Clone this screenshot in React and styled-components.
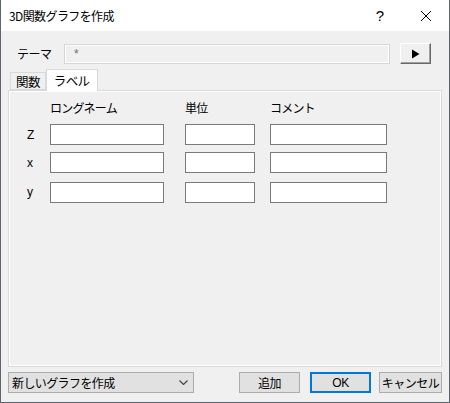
import React from 'react';
import styled, { createGlobalStyle } from 'styled-components';

const GlobalStyle = createGlobalStyle`
    html, body {
        margin: 0;
        padding: 0;
        background: #f0f0f0;
    }
    body {
        font-family: "Noto Sans CJK JP", "Noto Sans", sans-serif;
        font-size: 12px;
        color: #000;
    }
`;

const Window = styled.div`
    width: 450px;
    height: 403px;
    box-sizing: border-box;
    display: flex;
    flex-direction: column;
    background: #f0f0f0;
    border: 1px solid #5f6470;
    border-top: none;
`;

const TitleBar = styled.div`
    height: 31px;
    flex: none;
    background: #fff;
    display: flex;
    align-items: center;
    padding-left: 8px;
    font-size: 12px;
`;

const Title = styled.div`
    flex: 1;
    letter-spacing: -0.6px;
`;

const TitleButton = styled.div`
    width: 46px;
    height: 31px;
    display: flex;
    align-items: center;
    justify-content: center;
    font-family: "Liberation Sans", sans-serif;
    font-size: 15px;
`;

const Body = styled.div`
    flex: 1;
    display: flex;
    flex-direction: column;
    padding: 12px 7px 0 7px;
`;

const ThemeRow = styled.div`
    display: flex;
    align-items: center;
    height: 21px;
`;

const ThemeLabel = styled.div`
    width: 56px;
    padding-left: 9px;
    box-sizing: border-box;
    letter-spacing: -0.5px;
`;

const ThemeField = styled.div`
    width: 326px;
    height: 20px;
    box-sizing: border-box;
    border: 1px solid #d6d6d6;
    box-shadow: inset 0 0 0 1px #fff;
    background: #f0f0f0;
    color: #6d6d6d;
    font-family: "Liberation Sans", sans-serif;
    font-size: 12px;
    padding-left: 9px;
    line-height: 18px;
`;

const ArrowButton = styled.div`
    margin-left: 10px;
    width: 31px;
    height: 21px;
    box-sizing: border-box;
    border-top: 1px solid #fff;
    border-left: 1px solid #fff;
    border-right: 1px solid #696969;
    border-bottom: 1px solid #696969;
    box-shadow: inset -1px -1px 0 #a0a0a0;
    display: flex;
    align-items: center;
    justify-content: center;
    background: #f0f0f0;
`;

const TabStrip = styled.div`
    display: flex;
    align-items: flex-end;
    margin-top: 5px;
    height: 21px;
    padding-left: 2px;
    position: relative;
    z-index: 1;
`;

const Tab = styled.div`
    box-sizing: border-box;
    height: ${p => (p.$active ? '22px' : '18px')};
    padding: 0 ${p => (p.$active ? '7px' : '5px')};
    margin-bottom: ${p => (p.$active ? '-1px' : '0')};
    background: ${p => (p.$active ? '#fff' : '#f0f0f0')};
    border: 1px solid #d9d9d9;
    border-bottom: ${p => (p.$active ? 'none' : '1px solid #d9d9d9')};
    display: flex;
    align-items: center;
    font-size: 12.5px;
    letter-spacing: -0.6px;
`;

const Panel = styled.div`
    width: 434px;
    height: 277px;
    box-sizing: border-box;
    border: 1px solid #d9d9d9;
    box-shadow: inset 0 0 0 1px #fff;
    background: #f0f0f0;
    padding-top: 9px;
`;

const FieldGrid = styled.div`
    display: grid;
    grid-template-columns: 41px 135px 85px 117px;
    grid-template-rows: 17px 21px 21px 21px;
    row-gap: 7px;
    & > :nth-child(n + 13) {
        margin-top: 2px;
    }
`;

const ColHead = styled.div`
    align-self: start;
    line-height: 15px;
    letter-spacing: -0.8px;
    font-size: 12px;
`;

const RowLabel = styled.div`
    padding-left: 18px;
    align-self: center;
    font-family: "Liberation Sans", sans-serif;
    font-size: 12px;
`;

const TextBox = styled.div`
    width: ${p => p.$w}px;
    height: 21px;
    box-sizing: border-box;
    border: 1px solid #7a7a7a;
    background: #fff;
`;

const Footer = styled.div`
    display: flex;
    align-items: center;
    margin-top: 5px;
    height: 21px;
`;

const Combo = styled.div`
    width: 186px;
    height: 21px;
    box-sizing: border-box;
    border: 1px solid #adadad;
    background: #e1e1e1;
    display: flex;
    align-items: center;
    justify-content: space-between;
    padding: 0 5px 0 3px;
    letter-spacing: -0.6px;
    font-size: 12px;
`;

const Spacer = styled.div`
    flex: 1;
`;

const Button = styled.div`
    width: ${p => p.$w}px;
    height: 21px;
    box-sizing: border-box;
    margin-left: ${p => p.$gap || 0}px;
    border: ${p => (p.$default ? '2px solid #0078d7' : '1px solid #adadad')};
    background: #e1e1e1;
    display: flex;
    align-items: center;
    justify-content: center;
    font-size: 12px;
    letter-spacing: -0.5px;
`;

const Latin = styled.span`
    font-family: "Liberation Sans", sans-serif;
`;

const CloseIcon = () => (
    <svg width="12" height="12" viewBox="0 0 12 12">
        <path d="M1 1 L11 11 M11 1 L1 11" stroke="#000" strokeWidth="1" fill="none" />
    </svg>
);

const PlayIcon = () => (
    <svg width="9" height="10" viewBox="0 0 9 10">
        <path d="M1 0.5 L8.5 5 L1 9.5 Z" fill="#000" />
    </svg>
);

const Chevron = () => (
    <svg width="9" height="5" viewBox="0 0 9 5">
        <path d="M0.5 0.5 L4.5 4.5 L8.5 0.5" stroke="#444" strokeWidth="1.2" fill="none" />
    </svg>
);

const rows = ['Z', 'x', 'y'];

const App = () => {
    return (
        <>
            <GlobalStyle />
            <Window>
                <TitleBar>
                    <Title>3D関数グラフを作成</Title>
                    <TitleButton>?</TitleButton>
                    <TitleButton><CloseIcon /></TitleButton>
                </TitleBar>
                <Body>
                    <ThemeRow>
                        <ThemeLabel>テーマ</ThemeLabel>
                        <ThemeField>*</ThemeField>
                        <ArrowButton><PlayIcon /></ArrowButton>
                    </ThemeRow>
                    <TabStrip>
                        <Tab>関数</Tab>
                        <Tab $active>ラベル</Tab>
                    </TabStrip>
                    <Panel>
                        <FieldGrid>
                            <div />
                            <ColHead>ロングネーム</ColHead>
                            <ColHead>単位</ColHead>
                            <ColHead>コメント</ColHead>
                            {rows.map(r => (
                                <React.Fragment key={r}>
                                    <RowLabel>{r}</RowLabel>
                                    <TextBox $w={114} />
                                    <TextBox $w={70} />
                                    <TextBox $w={117} />
                                </React.Fragment>
                            ))}
                        </FieldGrid>
                    </Panel>
                    <Footer>
                        <Combo>
                            <span>新しいグラフを作成</span>
                            <Chevron />
                        </Combo>
                        <Spacer />
                        <Button $w={61}>追加</Button>
                        <Button $w={61} $gap={10} $default><Latin>OK</Latin></Button>
                        <Button $w={63} $gap={8}>キャンセル</Button>
                    </Footer>
                </Body>
            </Window>
        </>
    );
};

export default App;
